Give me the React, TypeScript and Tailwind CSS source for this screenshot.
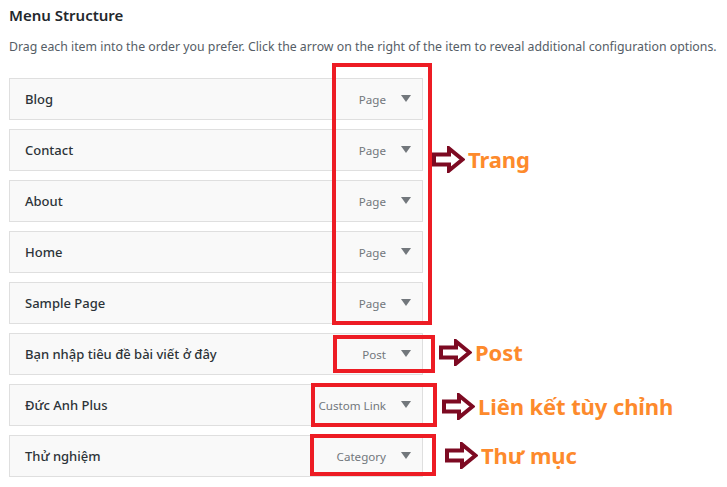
import type { ReactNode } from "react";

type TItem = {
  title: string;
  kind: string;
};

const items: TItem[] = [
  { title: "Blog", kind: "Page" },
  { title: "Contact", kind: "Page" },
  { title: "About", kind: "Page" },
  { title: "Home", kind: "Page" },
  { title: "Sample Page", kind: "Page" },
  { title: "Bạn nhập tiêu đề bài viết ở đây", kind: "Post" },
  { title: "Đức Anh Plus", kind: "Custom Link" },
  { title: "Thử nghiệm", kind: "Category" },
];

function HollowArrow() {
  return (
    <svg width="33" height="27" viewBox="0 0 33 27" className="shrink-0">
      <polygon
        points="2,8.5 17,8.5 17,2.5 30.5,13.5 17,24.5 17,18.5 2,18.5"
        fill="#ffffff"
        stroke="#7d0a22"
        strokeWidth="4"
        strokeLinejoin="miter"
      />
    </svg>
  );
}

function Note({ top, left, children }: { top: number; left: number; children: ReactNode }) {
  return (
    <div className="absolute flex items-center gap-[3px]" style={{ top, left }}>
      <HollowArrow />
      <span className="text-[22px] font-bold leading-[28px] text-[#fd8a2c] tracking-[-0.1px]">
        {children}
      </span>
    </div>
  );
}

function MenuRow({ item }: { item: TItem }) {
  return (
    <div className="flex h-[42px] items-center justify-between border border-[#dfdfdf] bg-[#f9f9f9] pl-[15px] pr-[11px] pt-[2px]">
      <span className="text-[13px] font-medium text-[#2c3338]">{item.title}</span>
      <div className="flex items-center gap-[15px]">
        <span className="text-[11.6px] text-[#72777c]">{item.kind}</span>
        <svg width="10" height="7" viewBox="0 0 10 7" className="-mt-[2px]">
          <polygon points="0,0 10,0 5,7" fill="#72777c" />
        </svg>
      </div>
    </div>
  );
}

export default function App() {
  return (
    <div
      className="relative h-[487px] w-[727px] overflow-hidden bg-white pl-[9px]"
      style={{ fontFamily: '"Noto Sans", "Open Sans", sans-serif' }}
    >
      <h2 className="pt-[5px] text-[15px] font-semibold leading-[20px] text-[#23282d]">
        Menu Structure
      </h2>
      <p className="mt-[13px] whitespace-nowrap text-[12.3px] leading-[18px] text-[#555d66]">
        Drag each item into the order you prefer. Click the arrow on the right of the item to reveal additional configuration options.
      </p>
      <div className="mt-[22px] flex w-[414px] flex-col gap-[9px]">
        {items.map((item) => (
          <MenuRow key={item.title} item={item} />
        ))}
      </div>

      {/* red highlight frames */}
      <div className="absolute left-[332px] top-[63px] h-[262px] w-[100px] border-[4px] border-[#ed1c24]" />
      <div className="absolute left-[333px] top-[335px] h-[38px] w-[102px] border-[4px] border-[#ed1c24]" />
      <div className="absolute left-[311px] top-[383px] h-[44px] w-[126px] border-[4px] border-[#ed1c24]" />
      <div className="absolute left-[310px] top-[434px] h-[42px] w-[126px] border-[4px] border-[#ed1c24]" />

      <Note top={145} left={432}>Trang</Note>
      <Note top={338} left={439}>Post</Note>
      <Note top={392} left={442}>Liên kết tùy chỉnh</Note>
      <Note top={441} left={445}>Thư mục</Note>
    </div>
  );
}
